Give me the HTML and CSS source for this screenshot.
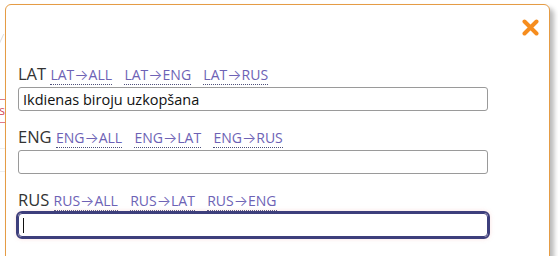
FILE: index.html
```html
<!DOCTYPE html>
<html lang="lv">
<head>
<meta charset="utf-8">
<title>Tulkojumi</title>
<link rel="stylesheet" href="styles.css">
</head>
<body>
<div class="backdrop">
  <div class="ghost-a"></div>
  <div class="ghost-tag">is</div>
  <div class="ghost-row"></div>
</div>
<div class="modal">
  <div class="modal-head">
    <button class="close" type="button" aria-label="Aizvērt">
      <svg width="17" height="17" viewBox="0 0 17 17"><path d="M2.5 2.5 L14.5 14.5 M14.5 2.5 L2.5 14.5" stroke="#f68d1e" stroke-width="4" stroke-linecap="round" fill="none"/></svg>
    </button>
  </div>
  <div class="field">
    <div class="field-label">LAT <a class="tr">LAT<span class="arr">→</span>ALL</a> <a class="tr">LAT<span class="arr">→</span>ENG</a> <a class="tr">LAT<span class="arr">→</span>RUS</a></div>
    <input class="text" type="text" value="Ikdienas biroju uzkopšana">
  </div>
  <div class="field">
    <div class="field-label">ENG <a class="tr">ENG<span class="arr">→</span>ALL</a> <a class="tr">ENG<span class="arr">→</span>LAT</a> <a class="tr">ENG<span class="arr">→</span>RUS</a></div>
    <input class="text" type="text" value="">
  </div>
  <div class="field">
    <div class="field-label">RUS <a class="tr">RUS<span class="arr">→</span>ALL</a> <a class="tr">RUS<span class="arr">→</span>LAT</a> <a class="tr">RUS<span class="arr">→</span>ENG</a></div>
    <input class="text focus" type="text" value="" autofocus>
  </div>
</div>
</body>
</html>
```
FILE: styles.css
```css
html, body {
  margin: 0;
  padding: 0;
  background: #ffffff;
  width: 558px;
  height: 256px;
  overflow: hidden;
  font-family: "Open Sans", "Noto Sans", sans-serif;
}

.backdrop {
  position: absolute;
  inset: 0;
}
.ghost-a {
  position: absolute;
  left: 0;
  top: 34px;
  width: 6px;
  height: 14px;
  border-left: 1px solid #ddd;
  transform: skewX(-25deg);
}
.ghost-tag {
  position: absolute;
  left: -8px;
  top: 99px;
  width: 12px;
  height: 22px;
  border: 1px solid #e07b86;
  color: #d24c5c;
  font-size: 12px;
  line-height: 22px;
  text-align: right;
}
.ghost-row {
  position: absolute;
  left: 0;
  top: 148px;
  width: 5px;
  height: 22px;
  border-top: 1px solid #eee;
  border-bottom: 1px solid #eee;
}

.modal {
  position: absolute;
  left: 5px;
  top: 4px;
  width: 545px;
  height: 280px;
  background: #fff;
  border: 1px solid #e59c45;
  border-radius: 6px;
  box-shadow: 4px 4px 5px rgba(0, 0, 0, 0.28);
  padding: 0 10px 0 11px;
  box-sizing: border-box;
}

.modal-head {
  display: flex;
  justify-content: flex-end;
  height: 58px;
  padding-top: 14px;
  box-sizing: border-box;
}
.close {
  border: 0;
  background: none;
  padding: 0;
  width: 17px;
  height: 17px;
  cursor: pointer;
}
.close svg { display: block; }

.field {
  display: flex;
  flex-direction: column;
  margin-bottom: 15px;
}
.field-label {
  font-size: 16.5px;
  line-height: 22px;
  color: #333;
  margin-left: 1px;
  white-space: nowrap;
}
.tr {
  font-size: 14px;
  color: #6d62b5;
  text-decoration: none;
  border-bottom: 1px dotted #4d4f7a;
  margin-right: 8px;
  cursor: pointer;
}
.arr {
  font-family: "Inter", "Roboto", sans-serif;
  font-weight: 300;
  font-size: 15px;
}
.text {
  width: 470px;
  height: 24px;
  box-sizing: border-box;
  margin: 1px 0 0 1px;
  border: 1px solid #9a9a9a;
  border-radius: 3px;
  padding: 0 4px;
  font-family: "Open Sans", sans-serif;
  font-size: 14.5px;
  color: #111;
  background: #fff;
  outline: none;
}
.text.focus {
  border: 1px solid #3d3f7c;
  outline: 2px solid #3d3f7c;
  outline-offset: 0;
  border-radius: 4px;
  box-shadow: 0 0 4px 2px rgba(240, 170, 170, 0.35);
  background: #fff linear-gradient(#111, #111) no-repeat 4px center / 1px 15px;
  caret-color: transparent;
}
```
